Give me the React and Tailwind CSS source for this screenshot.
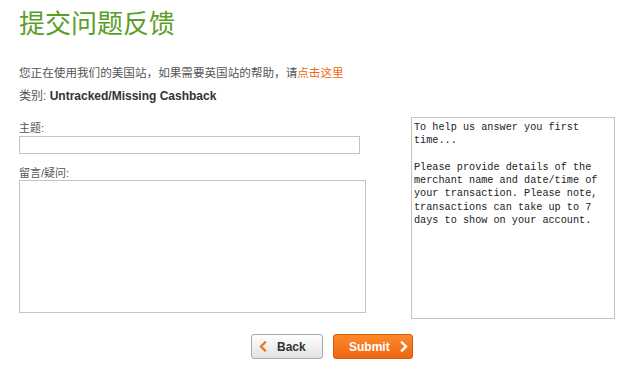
function Chevron({ dir = "right", className = "" }) {
  return (
    <svg width="8" height="11" viewBox="0 0 8 11" className={className}>
      <path
        d={dir === "right" ? "M2 1.5 L6 5.5 L2 9.5" : "M6 1.5 L2 5.5 L6 9.5"}
        fill="none"
        stroke="currentColor"
        strokeWidth="2.4"
        strokeLinecap="square"
      />
    </svg>
  );
}

function App() {
  const sans = 'font-["Liberation_Sans","Noto_Sans_CJK_SC",sans-serif]';

  return (
    <div className={`min-h-[372px] w-[640px] bg-white pl-[19px] pt-[10px] ${sans}`}>
      <h1 className="text-[26px] leading-[28px] tracking-[0px] text-[#5a9e28]">提交问题反馈</h1>

      <p className="mt-[27px] text-[11.6px] leading-[16px] text-[#555]">
        您正在使用我们的美国站，如果需要英国站的帮助，请
        <a href="#" className="text-[#f06a0f]">点击这里</a>
      </p>
      <p className="mt-[7px] text-[12px] leading-[16px] text-[#555]">
        类别: <span className="font-bold text-[#333]">Untracked/Missing Cashback</span>
      </p>

      <div className="mt-[13px] flex items-start">
        <div className="mt-[4px] w-[347px]">
          <label className="block text-[11px] leading-[15px] text-[#555]">主题:</label>
          <input
            type="text"
            className="block h-[18px] w-[341px] border border-[#c4c4c4] bg-white outline-none"
          />
          <label className="mt-[12px] block text-[11px] leading-[14px] text-[#555]">留言/疑问:</label>
          <textarea className="block h-[133px] w-[347px] resize-none border border-[#c4c4c4] bg-white outline-none" />
        </div>

        <textarea
          readOnly
          className='ml-[45px] block h-[202px] w-[204px] resize-none border border-[#c4c4c4] bg-white pl-[2px] pr-[2px] pt-[3px] font-["Liberation_Mono",monospace] text-[10.2px] leading-[13.3px] text-[#222] outline-none'
          defaultValue={
            "To help us answer you first time...\n\nPlease provide details of the merchant name and date/time of your transaction. Please note, transactions can take up to 7 days to show on your account."
          }
        />
      </div>

      <div className="mt-[15px] flex justify-center gap-[10px] pl-[5px]">
        <button className="flex h-[25px] w-[72px] items-center rounded-[3px] border border-[#a9a9a9] bg-gradient-to-b from-white to-[#e2e2e2] pl-[7px] text-[12px] font-bold text-[#333]">
          <Chevron dir="left" className="text-[#f07a1e]" />
          <span className="ml-[10px]">Back</span>
        </button>
        <button className="flex h-[25px] w-[80px] items-center rounded-[3px] border border-[#d65a0e] bg-gradient-to-b from-[#fb8a2c] to-[#f0640f] pl-[15px] text-[12px] font-bold text-white">
          <span>Submit</span>
          <Chevron dir="right" className="ml-[10px] text-white" />
        </button>
      </div>
    </div>
  );
}

export default App;
